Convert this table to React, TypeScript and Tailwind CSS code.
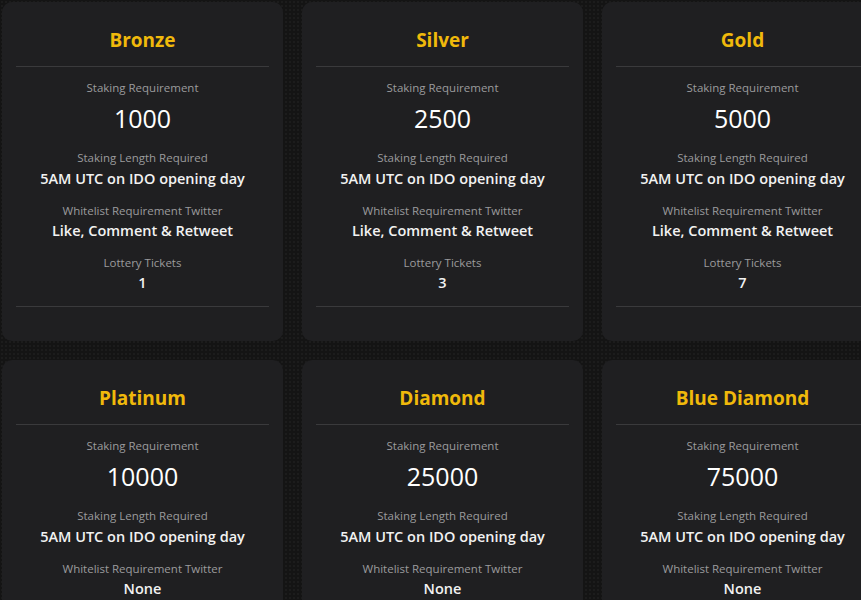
import React from "react";

type Tier = {
  name: string;
  stake: string;
  twitter: string;
  tickets: string;
};

const tiers: Tier[] = [
  { name: "Bronze", stake: "1000", twitter: "Like, Comment & Retweet", tickets: "1" },
  { name: "Silver", stake: "2500", twitter: "Like, Comment & Retweet", tickets: "3" },
  { name: "Gold", stake: "5000", twitter: "Like, Comment & Retweet", tickets: "7" },
  { name: "Platinum", stake: "10000", twitter: "None", tickets: "15" },
  { name: "Diamond", stake: "25000", twitter: "None", tickets: "40" },
  { name: "Blue Diamond", stake: "75000", twitter: "None", tickets: "125" },
];

const Label = ({ children }: { children: React.ReactNode }) => (
  <div className="text-[11.5px] leading-[16px] text-[#9b9b9d]">{children}</div>
);

const Value = ({ children }: { children: React.ReactNode }) => (
  <div className="mt-[3px] text-[14.5px] leading-[20px] font-semibold text-[#f2f2f2]">{children}</div>
);

const TierCard = ({ tier }: { tier: Tier }) => (
  <div className="rounded-[10px] bg-[#1f1f21] px-[14px] pt-[26px] pb-[34px] text-center">
    <h3 className="mb-[14px] text-[19px] leading-[24px] font-bold text-[#f0b90b]">{tier.name}</h3>
    <div className="h-px bg-[#3a3a3c]" />

    <div className="mt-[13px]">
      <Label>Staking Requirement</Label>
      <div className="mt-[6px] text-[25px] leading-[32px] font-medium text-white">{tier.stake}</div>
    </div>

    <div className="mt-[16px]">
      <Label>Staking Length Required</Label>
      <Value>5AM UTC on IDO opening day</Value>
    </div>

    <div className="mt-[14px]">
      <Label>Whitelist Requirement Twitter</Label>
      <div className="mt-[2px] text-[14.5px] leading-[20px] font-semibold text-[#f2f2f2]">{tier.twitter}</div>
    </div>

    <div className="mt-[14px]">
      <Label>Lottery Tickets</Label>
      <div className="mt-[2px] text-[14.5px] leading-[20px] font-semibold text-[#f2f2f2]">{tier.tickets}</div>
    </div>

    <div className="mt-[13px] h-px bg-[#3a3a3c]" />
  </div>
);

export default function App() {
  return (
    <div
      className="h-[600px] w-[861px] overflow-hidden bg-[#141414] bg-[radial-gradient(#1c1c1c_1px,transparent_1px)] bg-[size:4px_4px] pl-[2px] pt-[2px]"
      style={{ fontFamily: '"Open Sans", "Noto Sans", sans-serif' }}
    >
      <div className="grid w-[881px] grid-cols-[281px_281px_281px] gap-[19px]">
        {tiers.map((t) => (
          <TierCard key={t.name} tier={t} />
        ))}
      </div>
    </div>
  );
}
